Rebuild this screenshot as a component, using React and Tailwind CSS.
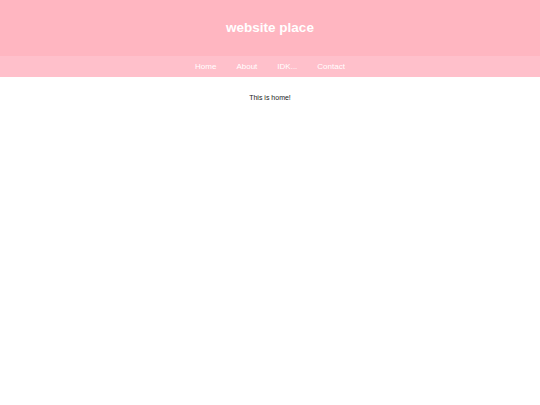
export default function App() {
  return (
    <div className="min-h-screen bg-white font-['Liberation_Sans',Arial,sans-serif]">
      <header className="bg-[#ffb6c1] h-[56px] flex items-center justify-center">
        <h1 className="text-white font-bold text-[13.5px]">website place</h1>
      </header>
      <nav className="bg-[#ffc0cb] h-[21px] flex items-center justify-center">
        {["Home", "About", "IDK...", "Contact"].map((item) => (
          <a key={item} className="text-white text-[8px] px-[10px] leading-none">
            {item}
          </a>
        ))}
      </nav>
      <main className="pt-[16px] text-center">
        <p className="text-[#222] text-[7px] leading-[9px]">This is home!</p>
      </main>
    </div>
  );
}
